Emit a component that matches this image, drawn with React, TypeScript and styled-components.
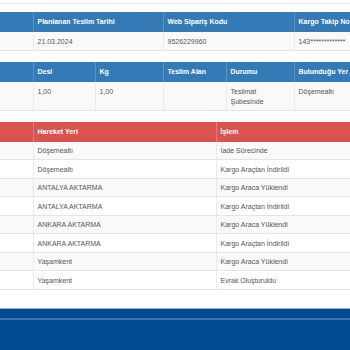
import React from "react";
import styled, { createGlobalStyle } from "styled-components";

const Global = createGlobalStyle`
  html, body { margin: 0; padding: 0; background: #fff; overflow: hidden; }
  body { font-family: "Liberation Sans", Arial, sans-serif; }
`;

const Page = styled.div`
  width: 350px;
  height: 350px;
  overflow: hidden;
  display: flex;
  flex-direction: column;
`;

const TopEdge = styled.div`
  height: 3px;
  border-bottom: 1px solid #e6e6e6;
  margin-bottom: 8px;
  flex: none;
`;

const Table = styled.table<{ $gap: number }>`
  border-collapse: collapse;
  table-layout: fixed;
  margin-bottom: ${(p) => p.$gap}px;
  font-size: 7px;
  flex: none;
`;

const HeadCell = styled.th<{ $tone: "blue" | "red" }>`
  background: ${(p) => (p.$tone === "blue" ? "#337ab7" : "#d9534f")};
  color: #fff;
  font-weight: bold;
  text-align: left;
  padding: 5px 4px;
  line-height: 10px;
  height: 10px;
  border-left: 1px solid
    ${(p) => (p.$tone === "blue" ? "#5a94c7" : "#e27c79")};
  &:first-child { border-left: none; }
`;

const Row = styled.tr`
  &:nth-of-type(odd) { background: #f9f9f9; }
`;

const Cell = styled.td`
  color: #555;
  padding: 4.5px 4px 3px;
  line-height: 10px;
  vertical-align: top;
  border-bottom: 1px solid #e4e4e4;
  border-left: 1px solid #eaeaea;
  &:first-child { border-left: none; }
`;

const Footer = styled.div`
  flex: 1;
  background: #024b93;
  border-top: 1px solid #8fb6de;
`;

const FooterStripe = styled.div`
  height: 9px;
  border-bottom: 2px solid #3f76b1;
`;

const Cols = ({ widths }: { widths: number[] }) => (
  <colgroup>
    {widths.map((w, i) => (
      <col key={i} style={{ width: w }} />
    ))}
  </colgroup>
);

const moves: [string, string][] = [
  ["Döşemealtı", "İade Sürecinde"],
  ["Döşemealtı", "Kargo Araçtan İndirildi"],
  ["ANTALYA AKTARMA", "Kargo Araca Yüklendi"],
  ["ANTALYA AKTARMA", "Kargo Araçtan İndirildi"],
  ["ANKARA AKTARMA", "Kargo Araca Yüklendi"],
  ["ANKARA AKTARMA", "Kargo Araçtan İndirildi"],
  ["Yaşamkent", "Kargo Araca Yüklendi"],
  ["Yaşamkent", "Evrak Oluşturuldu"],
];

export default function App() {
  return (
    <>
      <Global />
      <Page>
        <TopEdge />
        <Table $gap={11.5} style={{ width: 400 }}>
          <Cols widths={[33, 130, 131, 106]} />
          <thead>
            <tr>
              <HeadCell $tone="blue"></HeadCell>
              <HeadCell $tone="blue">Planlanan Teslim Tarihi</HeadCell>
              <HeadCell $tone="blue">Web Sipariş Kodu</HeadCell>
              <HeadCell $tone="blue">Kargo Takip No</HeadCell>
            </tr>
          </thead>
          <tbody>
            <Row>
              <Cell></Cell>
              <Cell>21.03.2024</Cell>
              <Cell>9526229960</Cell>
              <Cell>143*************</Cell>
            </Row>
          </tbody>
        </Table>
        <Table $gap={11} style={{ width: 400 }}>
          <Cols widths={[33, 62, 68, 63, 68, 106]} />
          <thead>
            <tr>
              <HeadCell $tone="blue"></HeadCell>
              <HeadCell $tone="blue">Desi</HeadCell>
              <HeadCell $tone="blue">Kg</HeadCell>
              <HeadCell $tone="blue">Teslim Alan</HeadCell>
              <HeadCell $tone="blue">Durumu</HeadCell>
              <HeadCell $tone="blue">Bulunduğu Yer</HeadCell>
            </tr>
          </thead>
          <tbody>
            <Row>
              <Cell></Cell>
              <Cell>1,00</Cell>
              <Cell>1,00</Cell>
              <Cell></Cell>
              <Cell>
                Teslimat
                <br />
                Şubesinde
              </Cell>
              <Cell>Döşemealtı</Cell>
            </Row>
          </tbody>
        </Table>
        <Table $gap={18} style={{ width: 400 }}>
          <Cols widths={[33, 183, 184]} />
          <thead>
            <tr>
              <HeadCell $tone="red"></HeadCell>
              <HeadCell $tone="red">Hareket Yeri</HeadCell>
              <HeadCell $tone="red">İşlem</HeadCell>
            </tr>
          </thead>
          <tbody>
            {moves.map(([place, action], i) => (
              <Row key={i}>
                <Cell></Cell>
                <Cell>{place}</Cell>
                <Cell>{action}</Cell>
              </Row>
            ))}
          </tbody>
        </Table>
        <Footer>
          <FooterStripe />
        </Footer>
      </Page>
    </>
  );
}
